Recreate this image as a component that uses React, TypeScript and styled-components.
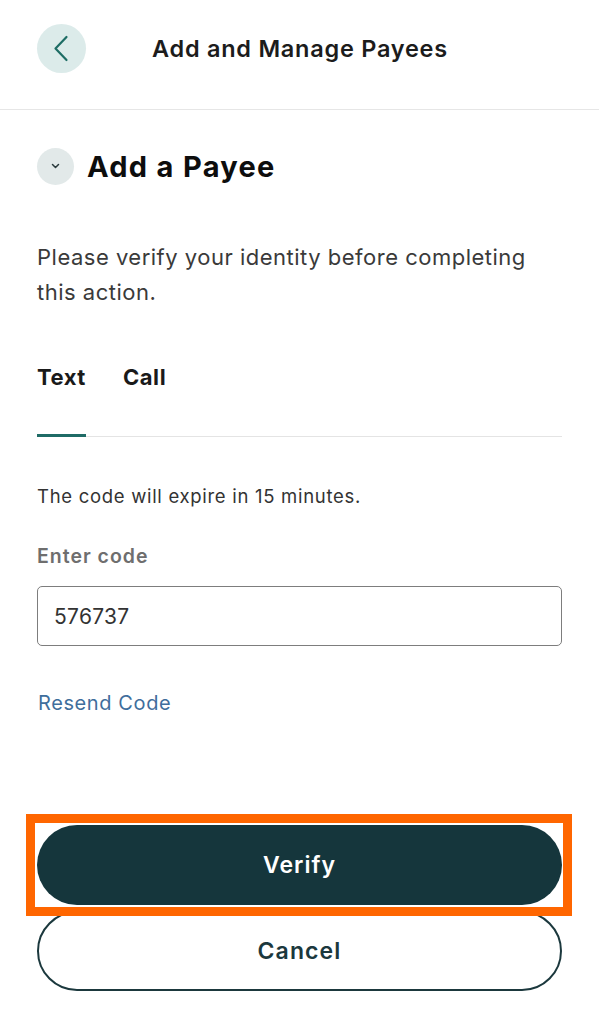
import styled, { createGlobalStyle } from 'styled-components';

const GlobalStyle = createGlobalStyle`
  body {
    margin: 0;
    background: #ffffff;
    font-family: Inter, "Noto Sans", "Liberation Sans", sans-serif;
    color: #1a1a1a;
  }
`;

const Page = styled.div`
  width: 599px;
  min-height: 1024px;
  background: #ffffff;
  display: flex;
  flex-direction: column;
`;

const Header = styled.header`
  height: 110px;
  box-sizing: border-box;
  padding: 24px 37px 0;
  border-bottom: 1px solid #e6e6e6;
  display: flex;
  align-items: flex-start;
`;

const CircleButton = styled.button<{ $size: number; $bg: string }>`
  width: ${(p) => p.$size}px;
  height: ${(p) => p.$size}px;
  border-radius: 50%;
  border: none;
  padding: 0;
  background: ${(p) => p.$bg};
  display: flex;
  align-items: center;
  justify-content: center;
  flex-shrink: 0;
`;

const HeaderTitle = styled.h1`
  margin: 0 0 0 66px;
  height: 49px;
  display: flex;
  align-items: center;
  font-size: 23.5px;
  font-weight: 600;
  letter-spacing: 0.75px;
  color: #1c1c1c;
`;

const Content = styled.main`
  padding: 38px 37px 0;
  display: flex;
  flex-direction: column;
`;

const SectionRow = styled.div`
  display: flex;
  align-items: center;
  gap: 13px;
`;

const SectionTitle = styled.h2`
  margin: 0;
  font-size: 29px;
  font-weight: 700;
  letter-spacing: 1.3px;
  color: #0d0d0d;
`;

const Description = styled.p`
  margin: 55px 0 0;
  font-size: 22px;
  line-height: 35px;
  letter-spacing: 0.5px;
  color: #3a3a3a;
`;

const TabList = styled.div`
  margin-top: 53px;
  display: flex;
  gap: 37px;
  border-bottom: 1px solid #e4e4e4;
`;

const Tab = styled.div<{ $active?: boolean }>`
  font-size: 22px;
  line-height: 28px;
  font-weight: 700;
  letter-spacing: 0.55px;
  color: #1a1a1a;
  padding-bottom: 43px;
  margin-bottom: -1px;
  border-bottom: 3px solid ${(p) => (p.$active ? '#1f6b66' : 'transparent')};
`;

const Note = styled.p`
  margin: 47px 0 0;
  font-size: 18.5px;
  line-height: 24px;
  letter-spacing: 0.7px;
  color: #333333;
`;

const FieldLabel = styled.label`
  margin-top: 36px;
  font-size: 19.5px;
  line-height: 24px;
  font-weight: 600;
  letter-spacing: 1px;
  color: #6e6e6e;
`;

const CodeInput = styled.input`
  margin-top: 18px;
  height: 60px;
  box-sizing: border-box;
  border: 1.5px solid #7d7d7d;
  border-radius: 5px;
  padding: 0 16px;
  font-family: inherit;
  font-size: 21px;
  letter-spacing: 0.3px;
  color: #333333;
  outline: none;
`;

const LinkButton = styled.a`
  margin-top: 45px;
  align-self: flex-start;
  font-size: 20px;
  line-height: 24px;
  letter-spacing: 0.6px;
  color: #3f6e9c;
  text-decoration: none;
  padding-left: 1px;
`;

const Actions = styled.div`
  margin-top: 110px;
  display: flex;
  flex-direction: column;
  gap: 6px;
`;

const Highlight = styled.div`
  position: relative;

  &::after {
    content: '';
    position: absolute;
    top: -11px;
    bottom: -11px;
    left: -11px;
    right: -10px;
    border: 9px solid #ff6600;
    pointer-events: none;
  }
`;

const PillButton = styled.button<{ $variant: 'solid' | 'outline' }>`
  width: 100%;
  height: 80px;
  box-sizing: border-box;
  border-radius: 40px;
  font-family: inherit;
  font-size: 23px;
  font-weight: 600;
  letter-spacing: ${(p) => (p.$variant === 'solid' ? '1px' : '1.1px')};
  display: flex;
  align-items: center;
  justify-content: center;
  background: ${(p) => (p.$variant === 'solid' ? '#15363c' : '#ffffff')};
  color: ${(p) => (p.$variant === 'solid' ? '#ffffff' : '#1b383d')};
  border: ${(p) => (p.$variant === 'solid' ? 'none' : '2.5px solid #1b383d')};
`;

const BackIcon = () => (
  <svg width="49" height="49" viewBox="0 0 49 49" fill="none">
    <path d="M29.5 13 L18.5 24.5 L29.5 36" stroke="#1e6d65" strokeWidth="2.2" strokeLinecap="round" strokeLinejoin="round" />
  </svg>
);

const ChevronDown = () => (
  <svg width="37" height="37" viewBox="0 0 37 37" fill="none">
    <path d="M15.5 16.5 L18.5 19.5 L21.5 16.5" stroke="#2a3a3c" strokeWidth="1.5" strokeLinecap="round" strokeLinejoin="round" />
  </svg>
);

const App = () => {
  return (
    <Page>
      <GlobalStyle />
      <Header>
        <CircleButton $size={49} $bg="#dcebea" aria-label="Back">
          <BackIcon />
        </CircleButton>
        <HeaderTitle>Add and Manage Payees</HeaderTitle>
      </Header>
      <Content>
        <SectionRow>
          <CircleButton $size={37} $bg="#e2e9e9" aria-label="Collapse">
            <ChevronDown />
          </CircleButton>
          <SectionTitle>Add a Payee</SectionTitle>
        </SectionRow>
        <Description>Please verify your identity before completing this action.</Description>
        <TabList>
          <Tab $active>Text</Tab>
          <Tab>Call</Tab>
        </TabList>
        <Note>The code will expire in 15 minutes.</Note>
        <FieldLabel htmlFor="code">Enter code</FieldLabel>
        <CodeInput id="code" defaultValue="576737" />
        <LinkButton href="#">Resend Code</LinkButton>
        <Actions>
          <Highlight>
            <PillButton $variant="solid">Verify</PillButton>
          </Highlight>
          <PillButton $variant="outline">Cancel</PillButton>
        </Actions>
      </Content>
    </Page>
  );
};

export default App;
